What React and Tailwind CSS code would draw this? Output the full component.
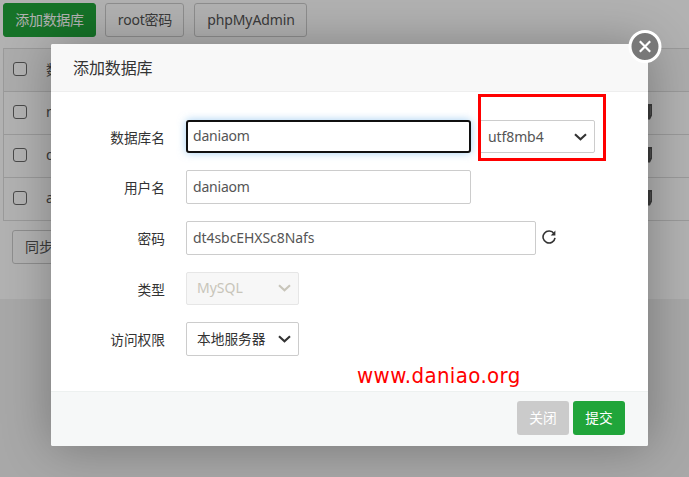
const rows = ["mwiki", "duanlin", "auxpihi"];

function Check() {
  return <span className="ml-[9px] h-[14px] w-[14px] shrink-0 rounded-[3px] border border-[#6a6a6a] bg-white" />;
}

function DocIcon() {
  return (
    <svg className="h-4 w-3" viewBox="0 0 12 16" fill="none">
      <path d="M1 4h7v11H1z" fill="#fff" stroke="#555" />
      <path d="M3 0h9v11.5L10 15.5H8V2.5H3z" fill="#555" />
      <path d="M10.4 2v9" stroke="#888" strokeWidth="0.6" />
    </svg>
  );
}

function Chevron() {
  return (
    <svg className="h-[8px] w-[13px] shrink-0" viewBox="0 0 13 8" fill="none">
      <path d="M1 1.2 6.5 6.3 12 1.2" stroke="currentColor" strokeWidth="2.1" />
    </svg>
  );
}

function Label({ children }) {
  return <div className="w-[114px] shrink-0 pt-[3px] text-right text-[13.7px] text-[#333]">{children}</div>;
}

export default function App() {
  return (
    <div className="relative h-[477px] w-[689px] overflow-hidden bg-[#f1f1f1] font-['Noto_Sans','Noto_Sans_CJK_SC',sans-serif] text-[14px] text-[#555]">
      <div className="h-[299px] bg-white pl-[3px] pt-[3px]">
        <div className="flex h-[34px] gap-[9px] leading-[32px]">
          <div className="w-[93px] rounded-[3px] border border-[#20a53a] bg-[#20a53a] text-center tracking-[-0.3px] text-white">添加数据库</div>
          <div className="w-[79px] rounded-[3px] border border-[#ccc] pl-px text-center tracking-[-0.2px]">root密码</div>
          <div className="ml-px w-[113px] rounded-[3px] border border-[#ccc] pl-px text-center tracking-[-0.1px]">phpMyAdmin</div>
        </div>
        <div className="mt-[11px] w-[700px] border border-[#ddd]">
          <div className="flex h-[42px] items-center gap-[19px] bg-[#f6f6f6] pb-[2px]">
            <Check />
            <span className="tracking-[-0.3px]">数据库名</span>
          </div>
          {rows.map((name) => (
            <div key={name} className="flex h-[43px] items-center border-t border-[#ddd] pb-[2px]">
              <Check />
              <span className="ml-[19px] w-[594px] pb-px">{name}</span>
              <DocIcon />
            </div>
          ))}
        </div>
        <div className="ml-[9px] mt-[9px] h-[34px] w-[80px] rounded-[3px] border border-[#ccc] pl-3 leading-[32px]">同步选中</div>
      </div>

      <div className="absolute inset-0 bg-black/30" />

      <div className="absolute left-[51px] top-[44px] flex h-[402px] w-[597px] flex-col rounded-[2px] bg-white shadow-[1px_1px_50px_rgba(0,0,0,0.3)]">
        <div className="h-[48px] shrink-0 rounded-t-[2px] border-b border-[#eee] bg-[#f8f8f8] pl-[22px] text-[16px] leading-[49px] tracking-[-0.1px] text-[#333]">添加数据库</div>
        <div className="flex grow flex-col pt-[28px]">
          <div className="flex h-[33px] items-center">
            <Label>数据库名</Label>
            <div className="ml-[21px] h-[33px] w-[285px] rounded-[3px] border-2 border-[#101010] pl-[5px] leading-[28px] tracking-[-0.2px] shadow-[0_0_8px_rgba(102,175,233,0.6)]">daniaom</div>
            <div className="ml-[7px] flex h-[33px] w-[117px] items-center justify-between rounded-[2px] border border-[#ccc] pl-[9px] pr-[7px] tracking-[-0.1px]">utf8mb4<span className="text-[#333]"><Chevron /></span></div>
          </div>
          <div className="mt-[17px] flex h-[34px] items-center">
            <Label>用户名</Label>
            <div className="ml-[21px] h-[34px] w-[285px] rounded-[2px] border border-[#ccc] pl-[6px] leading-[31px] tracking-[-0.2px]">daniaom</div>
          </div>
          <div className="mt-[17px] flex h-[34px] items-center">
            <Label>密码</Label>
            <div className="ml-[21px] h-[34px] w-[350px] rounded-[2px] border border-[#ccc] pl-[6px] leading-[31px] tracking-[-0.07px]">dt4sbcEHXSc8Nafs</div>
            <svg className="mb-[2px] ml-[6px] h-[14px] w-[14px]" viewBox="0 0 14 14" fill="none">
              <path d="M12 3.6A6 6 0 1 0 13 7.8" stroke="#333" strokeWidth="1.6" />
              <path d="M13.4 0.5v5H8.7z" fill="#333" />
            </svg>
          </div>
          <div className="mt-[17px] flex h-[33px] items-center">
            <Label>类型</Label>
            <div className="ml-[21px] flex h-[33px] w-[113px] items-center justify-between rounded-[2px] border border-[#e6e6e6] bg-[#f7f7f7] pb-[2px] pl-[10px] pr-[7px] text-[#c8c5ba]">MySQL<Chevron /></div>
          </div>
          <div className="mt-[17px] flex h-[34px] items-center">
            <Label>访问权限</Label>
            <div className="ml-[21px] flex h-[34px] w-[113px] items-center justify-between rounded-[2px] border border-[#ccc] pl-[10px] pr-[7px] text-[13.7px] text-[#333]">本地服务器<Chevron /></div>
          </div>
        </div>
        <div className="flex h-[55px] shrink-0 items-start justify-end gap-1 rounded-b-[2px] border-t border-[#edf1f0] bg-[#f6f8f8] pr-[23px] pt-[9px] text-[13.7px] leading-[33px] text-white">
          <div className="h-[34px] w-[52px] rounded-[3px] bg-[#cbcbcb] text-center">关闭</div>
          <div className="h-[34px] w-[52px] rounded-[3px] bg-[#20a53a] text-center">提交</div>
        </div>
      </div>

      <div className="absolute left-[478px] top-[94px] h-[67px] w-[128px] border-[3px] border-[#f00]" />
      <div className="absolute left-[357px] top-[362px] whitespace-nowrap font-['DejaVu_Sans_Condensed','DejaVu_Sans',sans-serif] text-[22px] leading-[28px] tracking-[0.4px] text-[#f00]">www.daniao.org</div>
      <svg className="absolute left-[628px] top-[30px] h-[34px] w-[34px]" viewBox="0 0 34 34" fill="none">
        <circle cx="17" cy="16.5" r="15" fill="#787878" stroke="#fff" strokeWidth="3" />
        <path d="m11.8 11.3 10.4 10.4m0-10.4L11.8 21.7" stroke="#fff" strokeWidth="2.2" />
      </svg>
    </div>
  );
}
